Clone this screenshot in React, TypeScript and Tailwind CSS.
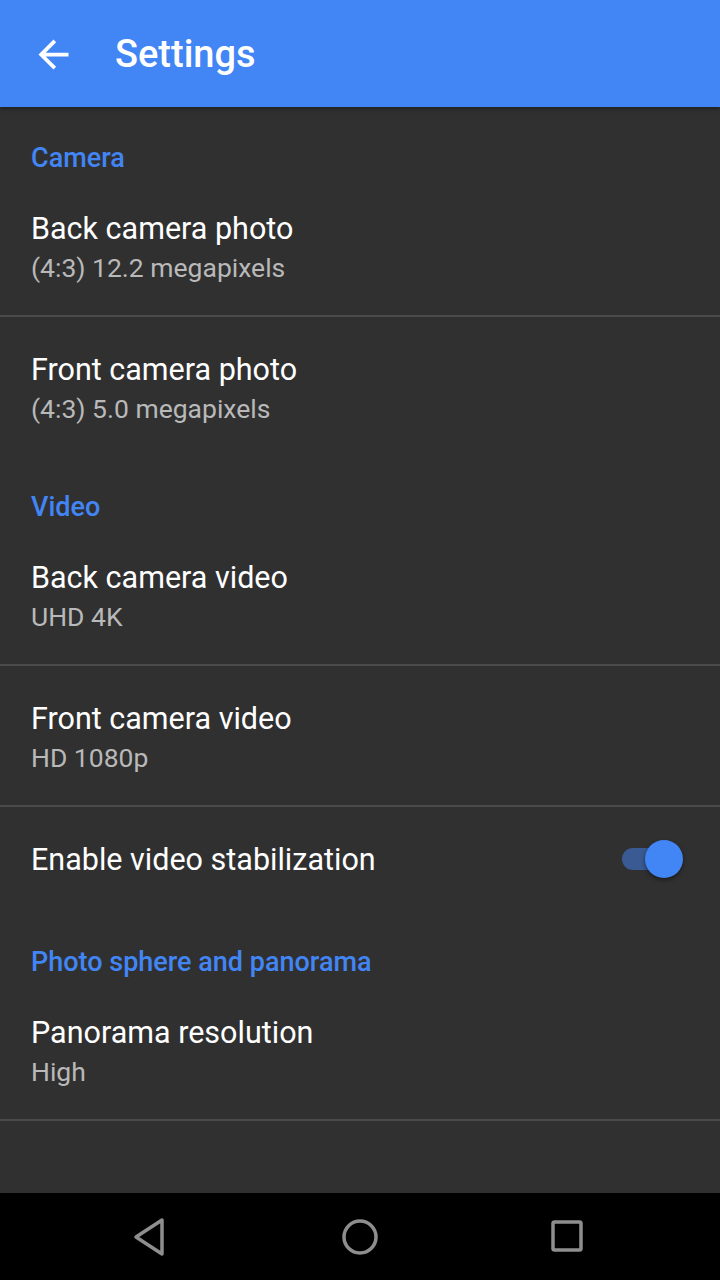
const font = { fontFamily: 'Roboto, "Noto Sans", sans-serif' }

type Pref = { title: string; summary?: string; divider?: boolean; toggle?: boolean }

const sections: { header: string; items: Pref[] }[] = [
  {
    header: 'Camera',
    items: [
      { title: 'Back camera photo', summary: '(4:3) 12.2 megapixels', divider: true },
      { title: 'Front camera photo', summary: '(4:3) 5.0 megapixels' },
    ],
  },
  {
    header: 'Video',
    items: [
      { title: 'Back camera video', summary: 'UHD 4K', divider: true },
      { title: 'Front camera video', summary: 'HD 1080p', divider: true },
      { title: 'Enable video stabilization', toggle: true },
    ],
  },
  {
    header: 'Photo sphere and panorama',
    items: [{ title: 'Panorama resolution', summary: 'High', divider: true }],
  },
]

function Toggle() {
  return (
    <div className="relative w-[61px] h-[38px] shrink-0">
      <div className="absolute left-0 top-[8px] w-[56px] h-[22px] rounded-full bg-[#395a92]" />
      <div className="absolute right-0 top-0 w-[38px] h-[38px] rounded-full bg-[#4285f4] shadow-[0_2px_4px_rgba(0,0,0,0.45)]" />
    </div>
  )
}

function PrefRow({ item }: { item: Pref }) {
  if (item.toggle) {
    return (
      <div className="h-[104px] flex items-start pt-[37px] pl-[31px] pr-[37px] justify-between">
        <div className="text-[30.5px] leading-[32px] text-white">{item.title}</div>
        <div className="-mt-[4px]">
          <Toggle />
        </div>
      </div>
    )
  }
  return (
    <div className={item.divider ? 'h-[141px] border-b-2 border-[#4a4a4a]' : 'h-[139px]'}>
      <div className="pt-[37px] pl-[31px]">
        <div className="text-[30.5px] leading-[32px] text-white">{item.title}</div>
        <div className="mt-[8px] text-[26.5px] leading-[30px] text-[#b9b9b9]">{item.summary}</div>
      </div>
    </div>
  )
}

export default function App() {
  return (
    <div className="w-[720px] h-[1280px] flex flex-col bg-[#303030] overflow-hidden" style={font}>
      {/* App bar */}
      <header className="h-[107px] shrink-0 bg-[#4285f4] flex items-center shadow-[0_2px_4px_rgba(0,0,0,0.35)] relative z-10">
        <svg width="45" height="45" viewBox="0 0 24 24" className="ml-[31px] mt-[1px]" fill="#fff">
          <path d="M20 11H7.83l5.59-5.59L12 4l-8 8 8 8 1.41-1.41L7.83 13H20v-2z" />
        </svg>
        <h1 className="ml-[39px] text-[38px] font-medium text-white leading-none mt-[1px]">Settings</h1>
      </header>

      {/* Preferences */}
      <main className="flex-1">
        {sections.map((s) => (
          <section key={s.header}>
            <div className="h-[69px] pt-[37px] pl-[31px] text-[27px] leading-[28px] font-medium text-[#4285f4]">
              {s.header}
            </div>
            {s.items.map((it) => (
              <PrefRow key={it.title} item={it} />
            ))}
          </section>
        ))}
      </main>

      {/* Nav bar */}
      <nav className="h-[87px] shrink-0 bg-black flex items-center justify-center gap-[165px]">
        <svg width="42" height="42" viewBox="0 0 42 42" fill="none" stroke="#8e8e8e" strokeWidth="3.5" strokeLinejoin="round">
          <path d="M30 4 L30 38 L4 21 Z" />
        </svg>
        <svg width="42" height="42" viewBox="0 0 42 42" fill="none" stroke="#8e8e8e" strokeWidth="3.5">
          <circle cx="21" cy="21" r="16" />
        </svg>
        <svg width="42" height="42" viewBox="0 0 42 42" fill="none" stroke="#8e8e8e" strokeWidth="3.5" strokeLinejoin="round">
          <rect x="7" y="6" width="28" height="28" rx="1.5" />
        </svg>
      </nav>
    </div>
  )
}
